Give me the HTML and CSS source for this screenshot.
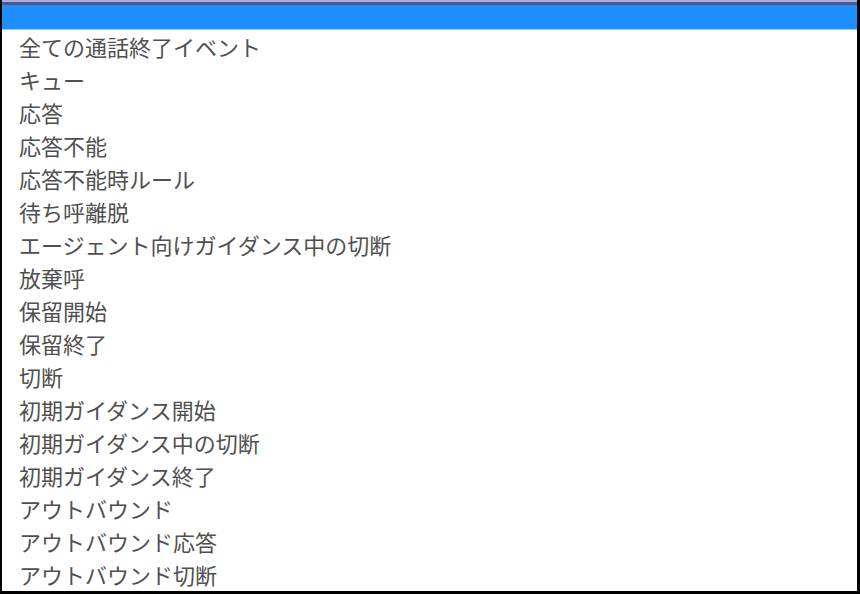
FILE: index.html
```html
<!DOCTYPE html>
<html lang="ja">
<head>
<meta charset="utf-8">
<link rel="stylesheet" href="styles.css">
</head>
<body>
<div class="frame">
  <div class="topline"></div>
  <div class="selected"></div>
  <ul class="options">
    <li>全ての通話終了イベント</li>
    <li>キュー</li>
    <li>応答</li>
    <li>応答不能</li>
    <li>応答不能時ルール</li>
    <li>待ち呼離脱</li>
    <li>エージェント向けガイダンス中の切断</li>
    <li>放棄呼</li>
    <li>保留開始</li>
    <li>保留終了</li>
    <li>切断</li>
    <li>初期ガイダンス開始</li>
    <li>初期ガイダンス中の切断</li>
    <li>初期ガイダンス終了</li>
    <li>アウトバウンド</li>
    <li>アウトバウンド応答</li>
    <li>アウトバウンド切断</li>
  </ul>
</div>
</body>
</html>
```

FILE: styles.css
```css
html, body {
  margin: 0;
  padding: 0;
  background: #ffffff;
}
.frame {
  width: 860px;
  height: 594px;
  box-sizing: border-box;
  border-left: 2px solid #000;
  border-right: 3px solid #000;
  border-bottom: 3px solid #000;
  overflow: hidden;
  display: flex;
  flex-direction: column;
  font-family: "Noto Sans CJK JP", "Noto Sans", sans-serif;
}
.topline {
  height: 2px;
  background: #a9aee0;
  border-bottom: 3px solid #4d5a86;
}
.selected {
  height: 26px;
  background: #1e8eff;
  border-bottom: 1px solid #8fcaff;
}
.options {
  list-style: none;
  margin: 0;
  padding: 0;
}
.options li {
  height: 33px;
  line-height: 33px;
  padding-left: 17px;
  font-size: 22px;
  color: #505050;
  white-space: nowrap;
}
```
